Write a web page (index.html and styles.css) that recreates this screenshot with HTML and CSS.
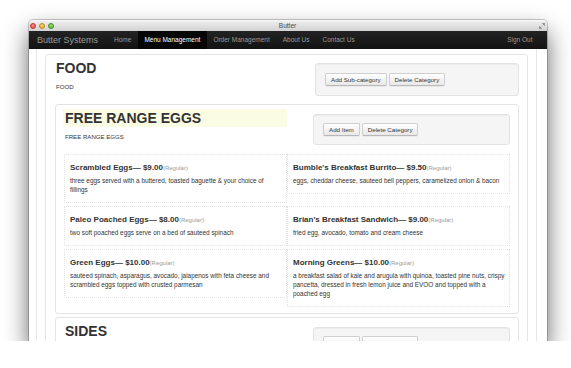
FILE: index.html
```html
<!DOCTYPE html>
<html lang="en">
<head>
<meta charset="utf-8">
<title>Butter</title>
<link rel="stylesheet" href="styles.css">
</head>
<body>
<div class="window">
  <div class="titlebar">
    <div class="lights">
      <span class="light red"></span>
      <span class="light yellow"></span>
      <span class="light green"></span>
    </div>
    <div class="wintitle">Butter</div>
    <svg class="resize" width="6" height="6" viewBox="0 0 6 6" aria-hidden="true">
      <path d="M3.4 0.3H5.7V2.6Z M0.3 3.4V5.7H2.6Z M5.4 0.6L3.6 2.4 M0.6 5.4L2.4 3.6" fill="#8a8a8a" stroke="#8a8a8a" stroke-width="0.7"/>
    </svg>
  </div>
  <nav class="navbar">
    <a class="brand" href="#">Butter Systems</a>
    <ul class="nav">
      <li><a href="#">Home</a></li>
      <li class="active"><a href="#">Menu Management</a></li>
      <li><a href="#">Order Management</a></li>
      <li><a href="#">About Us</a></li>
      <li><a href="#">Contact Us</a></li>
    </ul>
    <ul class="nav nav-right">
      <li><a href="#">Sign Out</a></li>
    </ul>
  </nav>
  <div class="page">
    <div class="container">
      <section class="category">
        <div class="cat-head food-head">
          <div class="cat-title">
            <h1>FOOD</h1>
            <p class="sub">FOOD</p>
          </div>
          <div class="well">
            <button class="btn">Add Sub-category</button>
            <button class="btn">Delete Category</button>
          </div>
        </div>

        <section class="subcat">
          <div class="cat-head">
            <div class="cat-title">
              <h1 class="editing">FREE RANGE EGGS</h1>
              <p class="sub">FREE RANGE EGGS</p>
            </div>
            <div class="well small">
              <button class="btn">Add Item</button>
              <button class="btn">Delete Category</button>
            </div>
          </div>
          <div class="items">
            <div class="item">
              <h2>Scrambled Eggs— $9.00<small>(Regular)</small></h2>
              <p>three eggs served with a buttered, toasted baguette &amp; your choice of<br>fillings</p>
            </div>
            <div class="item">
              <h2>Bumble's Breakfast Burrito— $9.50<small>(Regular)</small></h2>
              <p>eggs, cheddar cheese, sauteed bell peppers, caramelized onion &amp; bacon</p>
            </div>
            <div class="item">
              <h2>Paleo Poached Eggs— $8.00<small>(Regular)</small></h2>
              <p>two soft poached eggs serve on a bed of sauteed spinach</p>
            </div>
            <div class="item">
              <h2>Brian's Breakfast Sandwich— $9.00<small>(Regular)</small></h2>
              <p>fried egg, avocado, tomato and cream cheese</p>
            </div>
            <div class="item">
              <h2>Green Eggs— $10.00<small>(Regular)</small></h2>
              <p>sauteed spinach, asparagus, avocado, jalapenos with feta cheese and<br>scrambled eggs topped with crusted parmesan</p>
            </div>
            <div class="item">
              <h2>Morning Greens— $10.00<small>(Regular)</small></h2>
              <p>a breakfast salad of kale and arugula with quinoa, toasted pine nuts, crispy<br>pancetta, dressed in fresh lemon juice and EVOO and topped with a<br>poached egg</p>
            </div>
          </div>
        </section>

        <section class="subcat">
          <div class="cat-head">
            <div class="cat-title">
              <h1>SIDES</h1>
              <p class="sub">SIDES</p>
            </div>
            <div class="well small">
              <button class="btn">Add Item</button>
              <button class="btn">Delete Category</button>
            </div>
          </div>
        </section>
      </section>
    </div>
  </div>
</div>
</body>
</html>
```
FILE: styles.css
```css
* { box-sizing: border-box; }

html, body {
  margin: 0;
  background: #fff;
}

body {
  padding: 20px 24px 0 29px;
  font-family: "Liberation Sans", Arial, Helvetica, sans-serif;
  color: #333;
}

.window {
  width: 518px;
  height: 321px;
  display: flex;
  flex-direction: column;
  overflow: hidden;
  background: #fff;
  border-radius: 4px 4px 0 0;
  box-shadow: 0 12px 24px rgba(0, 0, 0, 0.62), 0 0 0 1px rgba(0, 0, 0, 0.2);
}

/* ---------- title bar ---------- */
.titlebar {
  flex: none;
  height: 11px;
  display: grid;
  grid-template-columns: 1fr auto 1fr;
  align-items: center;
  padding: 0 2px 0 1px;
  background: linear-gradient(#eeeeee, #d2d2d2);
  border-top: 1px solid #f8f8f8;
}

.lights {
  display: flex;
  gap: 3px;
  align-items: center;
}

.light {
  width: 6px;
  height: 6px;
  border-radius: 50%;
}

.red { background: radial-gradient(circle at 50% 35%, #ff8f86, #e0443a); border: 0.5px solid #b53a32; }
.yellow { background: radial-gradient(circle at 50% 35%, #ffd77a, #e6a91c); border: 0.5px solid #b88520; }
.green { background: radial-gradient(circle at 50% 35%, #a6e27d, #52ac2d); border: 0.5px solid #3f8a25; }

.wintitle {
  font-size: 6.5px;
  line-height: 10px;
  color: #4a4a4a;
}

.resize {
  justify-self: end;
}

/* ---------- navbar ---------- */
.navbar {
  flex: none;
  height: 18px;
  display: flex;
  align-items: center;
  padding: 0 8px;
  background: linear-gradient(#232323, #131313);
}

.brand {
  font-size: 9px;
  line-height: 18px;
  color: #9a9a9a;
  text-decoration: none;
  margin-right: 9.5px;
}

.nav {
  display: flex;
  list-style: none;
  margin: 0;
  padding: 0;
}

.nav a {
  display: block;
  padding: 0 6.5px;
  font-size: 6.5px;
  line-height: 18px;
  color: #9a9a9a;
  text-decoration: none;
}

.nav .active a {
  background: #060606;
  color: #fff;
}

.nav-right {
  margin-left: auto;
}

/* ---------- page ---------- */
.page {
  flex: 1;
  overflow: hidden;
}

.container {
  width: 501px;
  height: 100%;
  margin-left: 7px;
  padding: 5px 8px 0;
  border-left: 1px solid #e8e8e8;
  border-right: 1px solid #e8e8e8;
}

.category {
  display: flex;
  flex-direction: column;
  gap: 3px;
  padding: 4px 8px 0 9px;
  border: 1px solid #e4e4e4;
  border-radius: 3px;
}

.cat-head {
  display: grid;
  grid-template-columns: 224px 1fr;
  column-gap: 26px;
  align-items: start;
  margin-bottom: 9px;
}

.food-head {
  grid-template-columns: 1fr 204px;
  margin-bottom: 5px;
}

.food-head .cat-title {
  padding-left: 1px;
}

h1 {
  margin: 0;
  font-size: 14px;
  line-height: 18px;
  font-weight: bold;
  color: #333;
}

.subcat h1 {
  padding-left: 2px;
}

h1.editing {
  background: #fbfce4;
}

.sub {
  margin: 5px 0 0;
  font-size: 6.1px;
  line-height: 9px;
  color: #333;
}

.subcat .sub {
  padding-left: 2px;
}

.well {
  display: flex;
  gap: 2px;
  margin-top: 4px;
  padding: 9px;
  background: #f5f5f5;
  border: 1px solid #e3e3e3;
  border-radius: 3px;
  box-shadow: inset 0 1px 1px rgba(0, 0, 0, 0.04);
}

.well.small {
  margin-top: 5px;
  padding: 8px 9px;
}

.btn {
  height: 13px;
  padding: 0 5px;
  font-family: inherit;
  font-size: 6.2px;
  line-height: 11px;
  color: #333;
  background: linear-gradient(#ffffff, #e8e8e8);
  border: 1px solid #cfcfcf;
  border-bottom-color: #b8b8b8;
  border-radius: 2px;
  box-shadow: inset 0 1px 0 rgba(255, 255, 255, 0.3), 0 1px 1px rgba(0, 0, 0, 0.05);
}

.subcat {
  padding: 4px 8px 6px 7px;
  border: 1px solid #e4e4e4;
  border-radius: 3px;
}

.items {
  display: grid;
  grid-template-columns: 1fr 1fr;
  row-gap: 3px;
  align-items: start;
  padding-left: 1px;
}

.item {
  padding: 7px 3px 8px 5px;
  border: 1px dotted #e2e2e2;
}

.item h2 {
  margin: 0;
  font-size: 8px;
  line-height: 12px;
  font-weight: bold;
  color: #333;
  white-space: nowrap;
}

.item h2 small {
  font-size: 6px;
  font-weight: normal;
  color: #9a9a9a;
}

.item p {
  margin: 2px 0 0;
  font-size: 6.4px;
  line-height: 9px;
  color: #333;
  white-space: nowrap;
}
```
